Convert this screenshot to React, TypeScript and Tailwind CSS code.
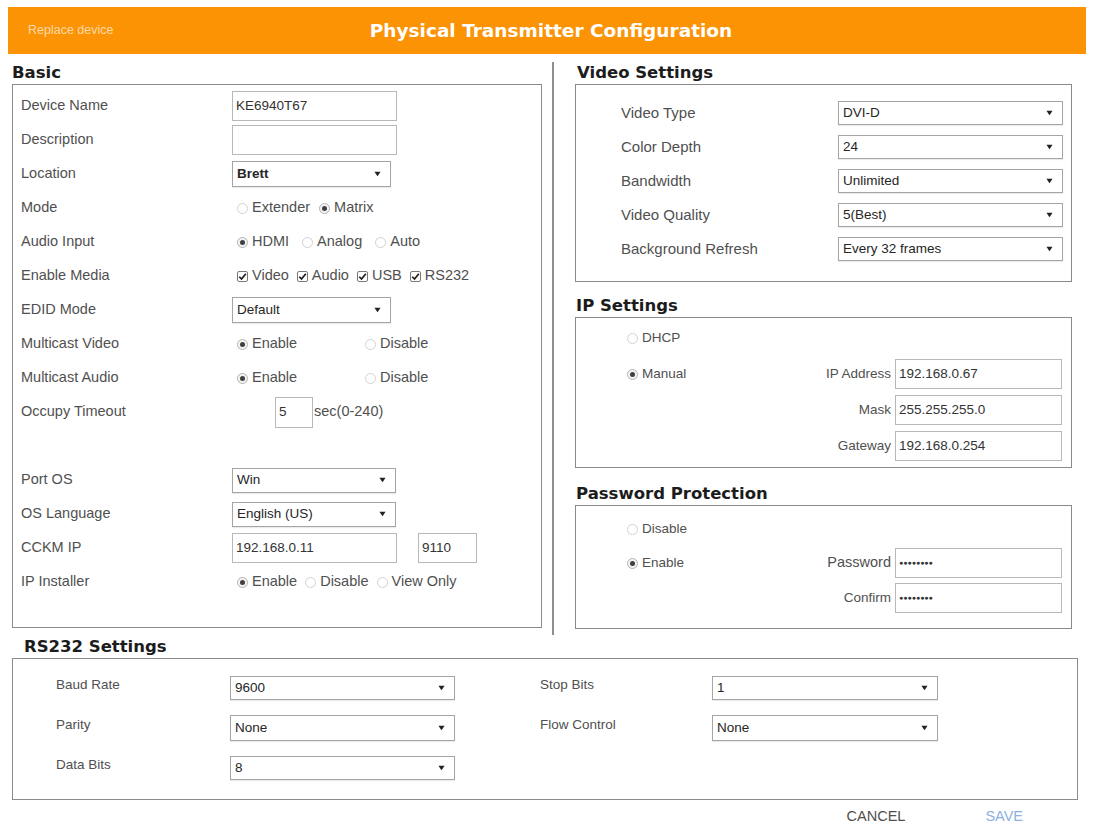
import React from "react";

const Radio = ({ on }: { on?: boolean }) => (
  <span
    className={
      on
        ? "inline-flex w-[11px] h-[11px] rounded-full border border-[#b4b4b4] bg-[#f3f3f3] items-center justify-center shrink-0"
        : "inline-flex w-[11px] h-[11px] rounded-full border border-[#d2d2d2] bg-white items-center justify-center shrink-0"
    }
  >
    {on && <span className="w-[5px] h-[5px] rounded-full bg-[#3f3f3f]" />}
  </span>
);

const Check = () => (
  <span className="inline-flex w-[11px] h-[11px] border border-[#7a7a7a] rounded-[2px] bg-white items-center justify-center shrink-0">
    <svg viewBox="0 0 10 10" className="w-[9px] h-[9px]">
      <path d="M1.4 5.3 L3.9 7.8 L8.7 1.9" stroke="#1e1e1e" strokeWidth="1.9" fill="none" />
    </svg>
  </span>
);

const Arrow = () => (
  <svg viewBox="0 0 8 6" className="w-[7px] h-[6px] shrink-0">
    <path d="M0.5 0.5 L7.5 0.5 L4 5.5 Z" fill="#222" />
  </svg>
);

const Select = ({ value, className }: { value: string; className: string }) => (
  <div
    className={
      "flex items-center justify-between border border-[#a5a5a5] bg-white pl-[4px] pr-[9px] text-[13.5px] text-[#262626] shadow-[0_1px_1px_rgba(0,0,0,0.08)] " +
      className
    }
  >
    <span>{value}</span>
    <Arrow />
  </div>
);

const Input = ({ value, className }: { value?: string; className: string }) => (
  <div
    className={
      "flex items-center border border-[#b8b8b8] bg-white pl-[3px] text-[13.5px] text-[#333] " + className
    }
  >
    {value}
  </div>
);

const Opt = ({ on, children, check }: { on?: boolean; children: React.ReactNode; check?: boolean }) => (
  <span className="inline-flex items-center">
    <span className="ml-[5px] mr-[4px] inline-flex">{check ? <Check /> : <Radio on={on} />}</span>
    <span>{children}</span>
  </span>
);

const Row = ({ label, children }: { label: string; children?: React.ReactNode }) => (
  <div className="flex items-center h-[34px]">
    <div className="w-[211px] shrink-0">{label}</div>
    <div className="flex items-center">{children}</div>
  </div>
);

const Heading = ({ children, className }: { children: React.ReactNode; className?: string }) => (
  <div
    className={
      "h-[22px] flex items-center font-['DejaVu_Sans',sans-serif] font-bold text-[16.5px] text-[#1c1c1c] " +
      (className || "")
    }
  >
    {children}
  </div>
);

const VRow = ({ label, value }: { label: string; value: string }) => (
  <div className="flex items-center h-[34px]">
    <div className="w-[217px] shrink-0 text-[15px]">{label}</div>
    <Select value={value} className="w-[225px] h-[24px]" />
  </div>
);

const Dots = () => <span className="text-[7px] tracking-[0px] text-[#333]">●●●●●●●●</span>;

export default function App() {
  return (
    <div className="w-[1093px] h-[825px] bg-white overflow-hidden pt-[7px] font-['Liberation_Sans',Arial,sans-serif] text-[14.5px] text-[#505050]">
      {/* Header */}
      <div className="ml-[8px] mr-[7px] h-[47px] bg-[#fb9305] grid grid-cols-[1fr_auto_1fr] items-center">
        <div className="pl-[20px] text-[12.5px] text-[#fdd9a8]">Replace device</div>
        <div className="ml-[8px] font-['DejaVu_Sans',sans-serif] font-bold text-[18.5px] text-white">
          Physical Transmitter Configuration
        </div>
        <div />
      </div>

      {/* Main */}
      <div className="flex mt-[8px] pl-[12px]">
        {/* Basic */}
        <div className="w-[530px] flex flex-col">
          <Heading>Basic</Heading>
          <div className="h-[544px] border border-[#8a8a8a] pt-[4px] pl-[8px]">
            <Row label="Device Name">
              <Input value="KE6940T67" className="w-[165px] h-[30px]" />
            </Row>
            <Row label="Description">
              <Input className="w-[165px] h-[30px]" />
            </Row>
            <Row label="Location">
              <Select value="Brett" className="w-[159px] h-[26px] font-bold" />
            </Row>
            <Row label="Mode">
              <Opt>Extender</Opt>
              <span className="w-[4px]" />
              <Opt on>Matrix</Opt>
            </Row>
            <Row label="Audio Input">
              <Opt on>HDMI</Opt>
              <span className="w-[8px]" />
              <Opt>Analog</Opt>
              <span className="w-[8px]" />
              <Opt>Auto</Opt>
            </Row>
            <Row label="Enable Media">
              <Opt check>Video</Opt>
              <span className="w-[3px]" />
              <Opt check>Audio</Opt>
              <span className="w-[3px]" />
              <Opt check>USB</Opt>
              <span className="w-[3px]" />
              <Opt check>RS232</Opt>
            </Row>
            <Row label="EDID Mode">
              <Select value="Default" className="w-[159px] h-[26px]" />
            </Row>
            <Row label="Multicast Video">
              <div className="w-[128px] flex">
                <Opt on>Enable</Opt>
              </div>
              <Opt>Disable</Opt>
            </Row>
            <Row label="Multicast Audio">
              <div className="w-[128px] flex">
                <Opt on>Enable</Opt>
              </div>
              <Opt>Disable</Opt>
            </Row>
            <Row label="Occupy Timeout">
              <Input value="5" className="ml-[43px] w-[38px] h-[31px] text-[12.5px]" />
              <span className="ml-[1px]">sec(0-240)</span>
            </Row>
            <Row label="" />
            <Row label="Port OS">
              <Select value="Win" className="w-[164px] h-[25px]" />
            </Row>
            <Row label="OS Language">
              <Select value="English (US)" className="w-[164px] h-[25px]" />
            </Row>
            <Row label="CCKM IP">
              <Input value="192.168.0.11" className="w-[165px] h-[30px]" />
              <Input value="9110" className="ml-[21px] w-[59px] h-[30px]" />
            </Row>
            <Row label="IP Installer">
              <Opt on>Enable</Opt>
              <span className="w-[3px]" />
              <Opt>Disable</Opt>
              <span className="w-[3px]" />
              <Opt>View Only</Opt>
            </Row>
          </div>
        </div>

        {/* Divider */}
        <div className="ml-[10px] w-[2px] h-[573px] bg-[#8e8e8e]" />

        {/* Right column */}
        <div className="ml-[21px] w-[497px] flex flex-col">
          <Heading className="pl-[2px]">Video Settings</Heading>
          <div className="h-[198px] border border-[#8a8a8a] pt-[11px] pl-[45px]">
            <VRow label="Video Type" value="DVI-D" />
            <VRow label="Color Depth" value="24" />
            <VRow label="Bandwidth" value="Unlimited" />
            <VRow label="Video Quality" value="5(Best)" />
            <VRow label="Background Refresh" value="Every 32 frames" />
          </div>

          <Heading className="mt-[13px] pl-[1px]">IP Settings</Heading>
          <div className="h-[151px] border border-[#8a8a8a] pt-[9px] pl-[46px] pr-[9px] text-[13.5px]">
            <div className="flex items-center h-[22px]">
              <Opt>DHCP</Opt>
            </div>
            <div className="flex mt-[10px]">
              <div className="flex items-center h-[30px]">
                <Opt on>Manual</Opt>
              </div>
              <div className="ml-auto grid grid-cols-[auto_167px] gap-x-[4px] gap-y-[6px] items-center">
                <span className="justify-self-end">IP Address</span>
                <Input value="192.168.0.67" className="h-[30px] text-[12.5px]" />
                <span className="justify-self-end">Mask</span>
                <Input value="255.255.255.0" className="h-[30px] text-[12.5px]" />
                <span className="justify-self-end">Gateway</span>
                <Input value="192.168.0.254" className="h-[30px] text-[12.5px]" />
              </div>
            </div>
          </div>

          <Heading className="mt-[15px] pl-[1px]">Password Protection</Heading>
          <div className="h-[124px] border border-[#8a8a8a] pt-[12px] pl-[46px] pr-[9px] text-[13.5px]">
            <div className="flex items-center h-[22px]">
              <Opt>Disable</Opt>
            </div>
            <div className="flex mt-[8px]">
              <div className="flex items-center h-[30px]">
                <Opt on>Enable</Opt>
              </div>
              <div className="ml-auto grid grid-cols-[auto_167px] gap-x-[4px] gap-y-[5px] items-center">
                <span className="justify-self-end text-[14.5px]">Password</span>
                <div className="h-[30px] border border-[#b8b8b8] bg-white pl-[3px] flex items-center">
                  <Dots />
                </div>
                <span className="justify-self-end">Confirm</span>
                <div className="h-[30px] border border-[#b8b8b8] bg-white pl-[3px] flex items-center">
                  <Dots />
                </div>
              </div>
            </div>
          </div>
        </div>
      </div>

      {/* RS232 */}
      <div className="mt-[1px] pl-[12px] pr-[15px]">
        <Heading className="pl-[12px]">RS232 Settings</Heading>
        <div className="h-[142px] border border-[#8a8a8a] pt-[9px] pl-[43px] text-[13.5px]">
          <div className="grid grid-cols-[174px_225px_85px_172px_226px] grid-rows-[40px_40px_40px] items-center">
            <span className="-mt-[5px]">Baud Rate</span>
            <Select value="9600" className="h-[24px] text-[12.5px]" />
            <span />
            <span className="-mt-[5px]">Stop Bits</span>
            <Select value="1" className="h-[24px]" />

            <span className="-mt-[5px]">Parity</span>
            <Select value="None" className="h-[26px]" />
            <span />
            <span className="-mt-[5px]">Flow Control</span>
            <Select value="None" className="h-[26px]" />

            <span className="-mt-[5px]">Data Bits</span>
            <Select value="8" className="h-[24px]" />
            <span />
            <span />
            <span />
          </div>
        </div>
      </div>

      {/* Buttons */}
      <div className="h-[34px] flex items-center justify-end pr-[70px] text-[14.5px]">
        <span className="text-[#505050]">CANCEL</span>
        <span className="ml-[80px] text-[#8db0e2]">SAVE</span>
      </div>
    </div>
  );
}
